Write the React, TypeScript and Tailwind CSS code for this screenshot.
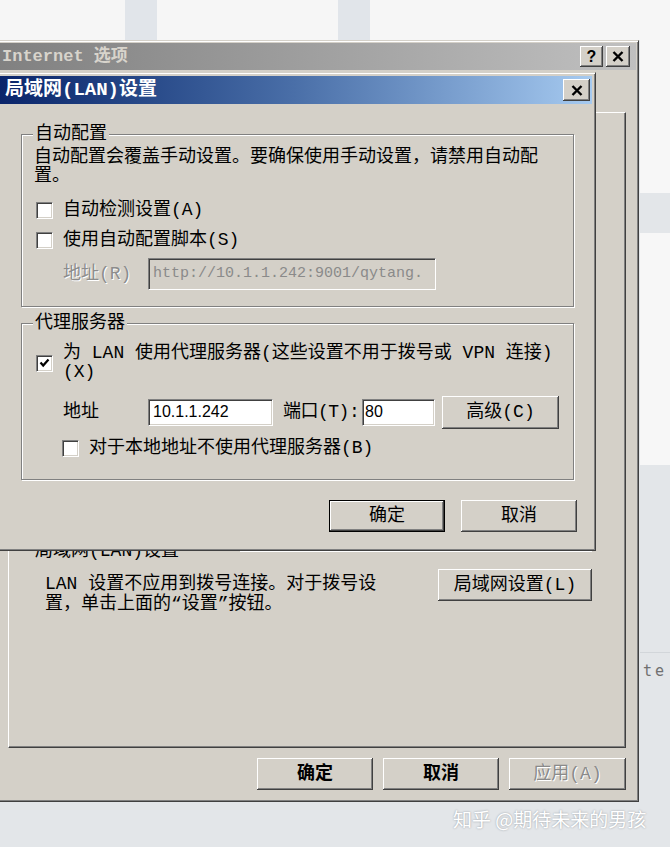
import React from "react";

const cjk = "font-['Liberation_Mono','Noto_Sans_CJK_SC',monospace]";
const frame =
  "border border-t-[#d4d0c8] border-l-[#d4d0c8] border-r-[#404040] border-b-[#404040] shadow-[inset_1px_1px_0_#ffffff,inset_-1px_-1px_0_#808080]";
const raised =
  "bg-[#d4d0c8] shadow-[inset_-1px_-1px_0_#404040,inset_1px_1px_0_#ffffff,inset_-2px_-2px_0_#808080]";
const sunken =
  "border border-t-[#808080] border-l-[#808080] border-r-white border-b-white shadow-[inset_1px_1px_0_#404040,inset_-1px_-1px_0_#d4d0c8]";
const group =
  "border border-[#808080] shadow-[inset_1px_1px_0_#ffffff,1px_1px_0_#ffffff]";

function Check({ checked }: { checked?: boolean }) {
  return (
    <span className={`w-[17px] h-[17px] shrink-0 bg-white flex items-center justify-center ${sunken}`}>
      {checked && (
        <svg width="11" height="10" viewBox="0 0 11 10">
          <path d="M1.5 4.5 L4.2 7.5 L9.5 1.5" fill="none" stroke="#000" strokeWidth="2.2" />
        </svg>
      )}
    </span>
  );
}

function CloseGlyph() {
  return (
    <svg width="12" height="11" viewBox="0 0 12 11">
      <path d="M1.5 1 L10.5 10 M10.5 1 L1.5 10" stroke="#000" strokeWidth="2.4" />
    </svg>
  );
}

function Btn({
  children,
  className = "",
  disabled,
  primary,
}: {
  children: React.ReactNode;
  className?: string;
  disabled?: boolean;
  primary?: boolean;
}) {
  return (
    <div
      className={`flex items-center justify-center ${raised} ${
        primary ? "border border-black" : ""
      } ${disabled ? "text-[#8a8a8a] [text-shadow:1px_1px_0_#ffffff]" : "text-black"} ${className}`}
    >
      {children}
    </div>
  );
}

const LanDialog: React.FC = () => {
  return (
    <div
      className={`absolute left-[-6px] top-[72px] w-[602px] h-[479px] bg-[#d4d0c8] p-[3px] ${frame} ${cjk} text-[18px] text-black`}
    >
      <div className="h-[28px] flex items-center justify-between bg-linear-to-r from-[#0a246a] via-[#4a6fa8] to-[#a6caf0] pl-[7px] pr-[2px]">
        <span className="text-white font-bold text-[19px] leading-[28px]">局域网(LAN)设置</span>
        <Btn className="w-[27px] h-[22px]">
          <CloseGlyph />
        </Btn>
      </div>

      <div className="pl-[23px] pr-[18px] pt-[20px]">
        <fieldset className={`${group} pl-[12px] pr-[8px] pb-[16px]`}>
          <legend className="-ml-[1px] px-[2px] bg-[#d4d0c8] leading-[20px]">自动配置</legend>
          <div className="mt-[4px] leading-[19px] whitespace-nowrap">
            <div>自动配置会覆盖手动设置。要确保使用手动设置，请禁用自动配</div>
            <div>置。</div>
          </div>
          <div className="mt-[9px] h-[30px] flex items-center gap-[10px] pl-[2px]">
            <Check />
            <span>自动检测设置(A)</span>
          </div>
          <div className="h-[30px] flex items-center gap-[10px] pl-[2px]">
            <Check />
            <span>使用自动配置脚本(S)</span>
          </div>
          <div className="mt-[3px] h-[32px] flex items-center pl-[29px]">
            <span className="w-[85px] text-[#8c8c8c] [text-shadow:1px_1px_0_#ffffff]">地址(R)</span>
            <div
              className={`w-[288px] h-[32px] bg-[#d4d0c8] flex items-center pl-[4px] text-[15px] text-[#8a8a8a] font-['Liberation_Mono',monospace] whitespace-nowrap overflow-hidden ${sunken}`}
            >
              http://10.1.1.242:9001/qytang.
            </div>
          </div>
        </fieldset>

        <fieldset className={`${group} mt-[6px] pl-[12px] pr-[8px] pb-[19px]`}>
          <legend className="-ml-[1px] px-[2px] bg-[#d4d0c8] leading-[20px]">代理服务器</legend>
          <div className="mt-[11px] flex items-center gap-[10px] pl-[2px]">
            <Check checked />
            <div className="leading-[19px] whitespace-nowrap">
              <div>为 LAN 使用代理服务器(这些设置不用于拨号或 VPN 连接)</div>
              <div>(X)</div>
            </div>
          </div>
          <div className="mt-[13px] h-[34px] flex items-center pl-[29px] whitespace-nowrap">
            <span className="w-[85px]">地址</span>
            <div
              className={`w-[125px] h-[27px] bg-white flex items-center pl-[4px] text-[16px] font-['Liberation_Sans',sans-serif] ${sunken}`}
            >
              10.1.1.242
            </div>
            <span className="w-[79px] ml-[10px] tracking-[-0.5px]">端口(T):</span>
            <div
              className={`w-[73px] h-[27px] bg-white flex items-center pl-[2px] text-[16px] font-['Liberation_Sans',sans-serif] ${sunken}`}
            >
              80
            </div>
            <Btn className="ml-[7px] w-[117px] h-[33px]">高级(C)</Btn>
          </div>
          <div className="mt-[7px] h-[24px] flex items-center gap-[10px] pl-[28px]">
            <Check />
            <span>对于本地地址不使用代理服务器(B)</span>
          </div>
        </fieldset>

        <div className="mt-[20px] -mr-[3px] flex justify-end gap-[16px]">
          <Btn primary className="w-[116px] h-[32px]">
            确定
          </Btn>
          <Btn className="w-[116px] h-[32px]">取消</Btn>
        </div>
      </div>
    </div>
  );
};

const OptionsDialog: React.FC = () => {
  return (
    <div
      className={`absolute left-[-10px] top-[40px] w-[649px] h-[762px] bg-[#d4d0c8] p-[2px] ${frame} ${cjk} text-[18px] text-black`}
    >
      <div className="h-[27px] flex items-center justify-between bg-linear-to-r from-[#808080] to-[#c0c0c0] pl-[9px] pr-[6px]">
        <span className="font-bold text-[17px] text-[#d8d4cc]">Internet 选项</span>
        <div className="flex gap-[3px]">
          <Btn className="w-[23px] h-[21px] font-bold text-[16px] font-['Liberation_Sans',sans-serif]">?</Btn>
          <Btn className="w-[24px] h-[21px]">
            <CloseGlyph />
          </Btn>
        </div>
      </div>

      <div className="pl-[15px] pr-[10px] pt-[42px]">
        <div className="h-[636px] border border-t-white border-l-white border-r-[#404040] border-b-[#404040] shadow-[inset_-1px_-1px_0_#808080] pt-[428px]">
          <div className="flex items-center justify-between pl-[26px] pr-[33px]">
            <span className="leading-[20px]">局域网(LAN)设置</span>
            <div className="w-[352px] h-[2px] border-t border-[#808080] border-b border-b-white" />
          </div>
          <div className="mt-[8px] flex justify-between pl-[36px] pr-[33px]">
            <div className="pt-[5px] leading-[20px] whitespace-nowrap">
              <div>LAN 设置不应用到拨号连接。对于拨号设</div>
              <div>置，单击上面的“设置”按钮。</div>
            </div>
            <Btn className="w-[154px] h-[32px]">局域网设置(L)</Btn>
          </div>
        </div>

        <div className="mt-[10px] flex justify-end gap-[10px] font-semibold">
          <Btn className="w-[116px] h-[32px]">确定</Btn>
          <Btn className="w-[116px] h-[32px]">取消</Btn>
          <Btn disabled className="w-[117px] h-[32px] font-normal">
            应用(A)
          </Btn>
        </div>
      </div>
    </div>
  );
};

export default function App() {
  return (
    <div className="relative w-[670px] h-[847px] overflow-hidden bg-[#e3e6e9] flex flex-col">
      <div className="h-[40px] shrink-0 bg-[#f6f6f6] flex">
        <div className="ml-[125px] w-[32px] bg-[#e1e5ea]" />
        <div className="ml-[181px] w-[32px] bg-[#e1e5ea]" />
      </div>
      <div className="flex-1 flex">
        <div className="flex-1" />
        <div className="w-[30px] flex flex-col">
          <div className="h-[153px] bg-[#f7f7f7]" />
          <div className="h-[40px] bg-[#e3e6e9]" />
          <div className="h-[232px] bg-[#f7f7f7]" />
          <div className="h-[187px]" />
          <div className="border-t border-[#d2d6da] pl-[3px] pt-[10px] leading-[16px] text-[15px] text-[#707070] tracking-[3px] font-['DejaVu_Sans_Mono',monospace]">
            te
          </div>
        </div>
      </div>

      <OptionsDialog />
      <LanDialog />

      <div className="absolute left-[453px] top-[806px] text-[19px] leading-[26px] text-white font-['Noto_Sans_CJK_SC',sans-serif] [text-shadow:0_0_2px_#8f959b] whitespace-nowrap">
        知乎 @期待未来的男孩
      </div>
    </div>
  );
}
